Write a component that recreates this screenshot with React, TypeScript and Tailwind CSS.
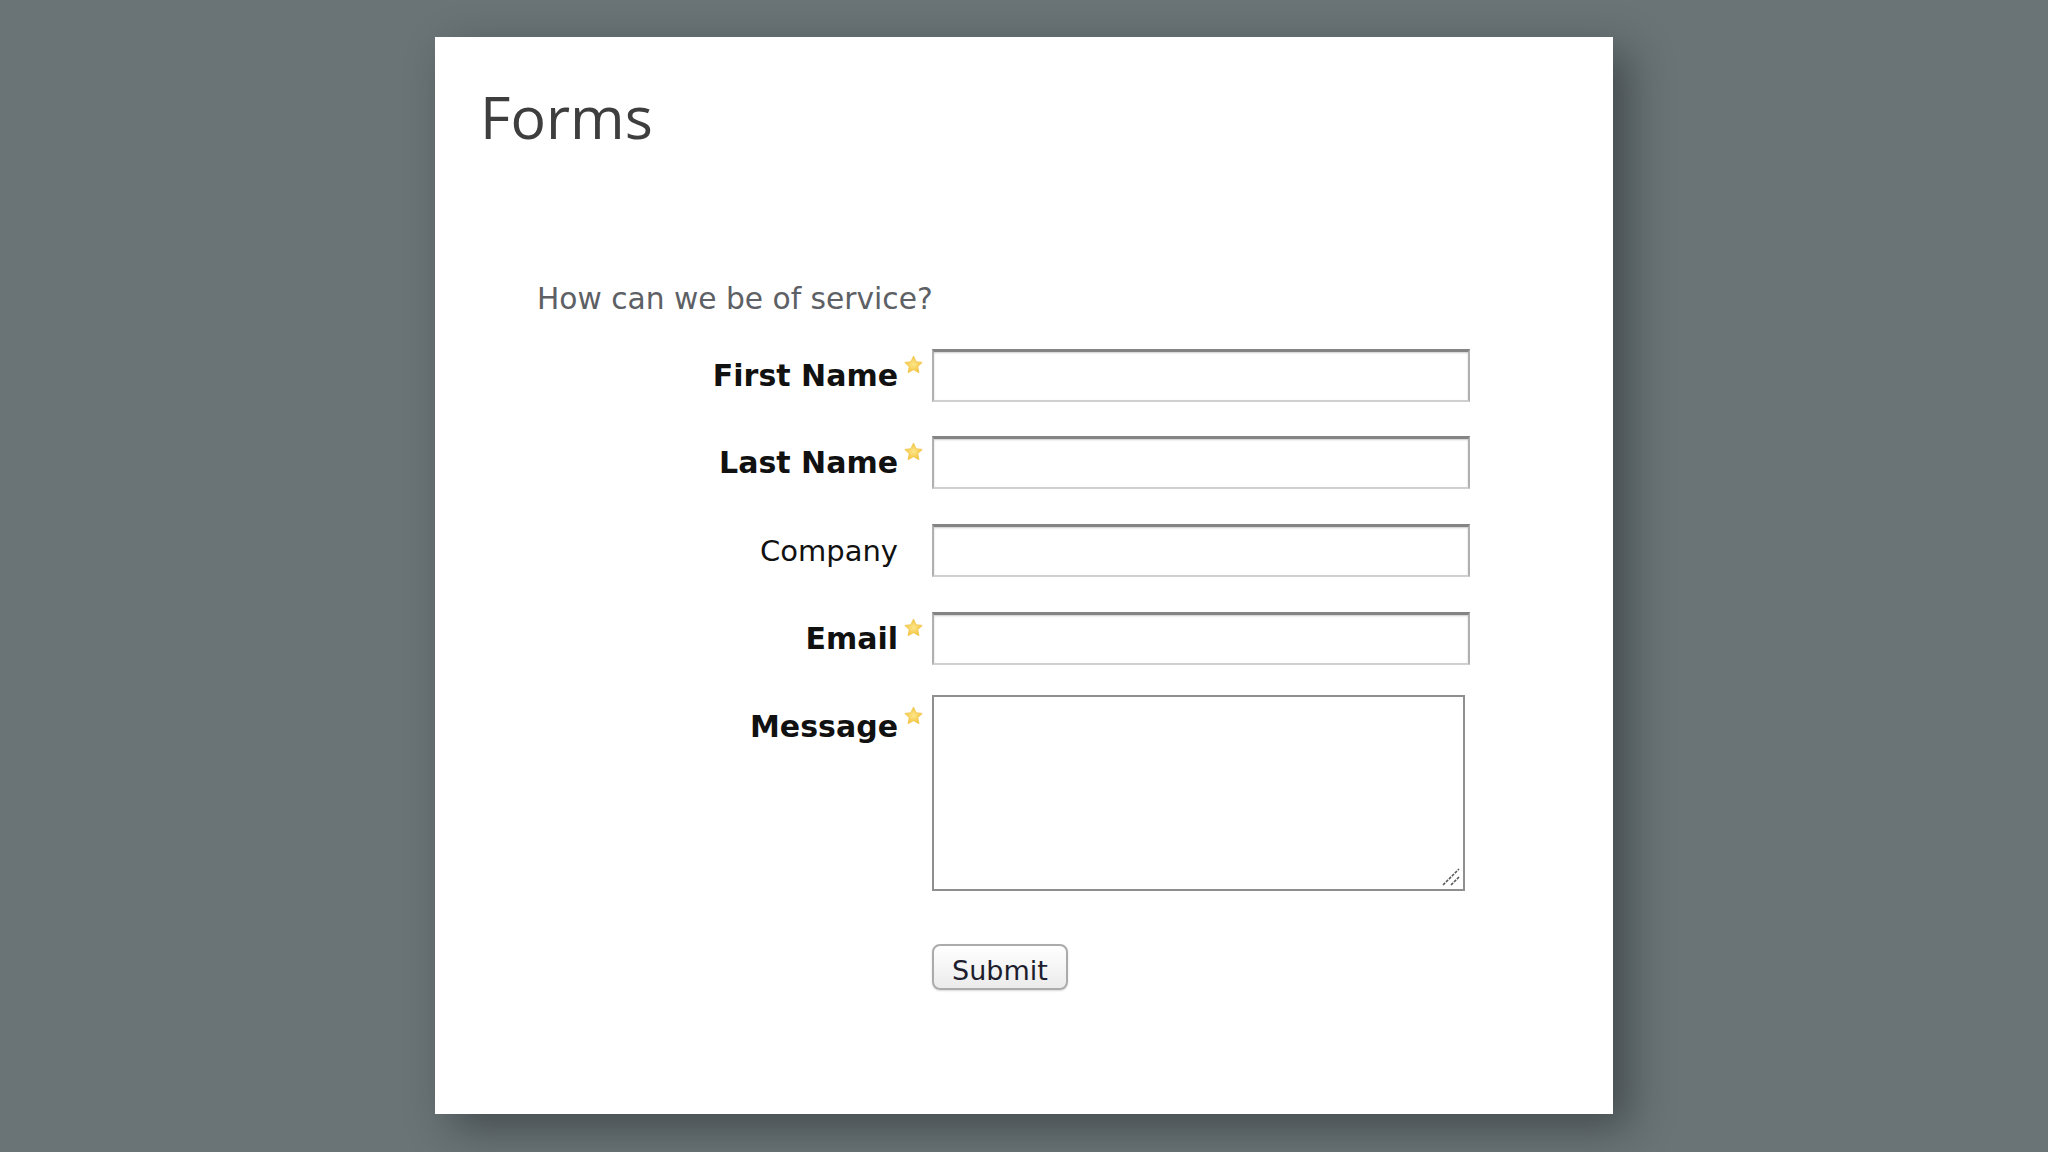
import React from "react";

function Star() {
  return (
    <svg
      width="21"
      height="19"
      viewBox="0 0 24 22"
      className="absolute right-[-26px] top-[-6px]"
    >
      <defs>
        <radialGradient id="sg" cx="50%" cy="50%" r="55%">
          <stop offset="0%" stopColor="#fde68a" />
          <stop offset="100%" stopColor="#f2c23a" />
        </radialGradient>
      </defs>
      <path
        d="M12 1.2l3.1 6.5 7 .9-5.1 4.9 1.3 7L12 17.1l-6.3 3.4 1.3-7L1.9 8.6l7-.9z"
        fill="url(#sg)"
        stroke="#f0c040"
        strokeWidth="0.8"
        strokeLinejoin="round"
      />
    </svg>
  );
}

function Row({
  label,
  required,
  mt,
}: {
  label: string;
  required?: boolean;
  mt: string;
}) {
  return (
    <div className={`flex items-start ${mt}`}>
      <div className="w-[463px] flex justify-end">
        {required ? (
          <span className="relative mt-[12px] text-[30px] leading-none font-bold text-[#111111] font-['DejaVu_Sans',sans-serif]">
            {label}
            <Star />
          </span>
        ) : (
          <span className="relative mt-[13px] text-[29px] leading-none text-[#111111] font-['DejaVu_Sans',sans-serif]">
            {label}
          </span>
        )}
      </div>
      <input
        type="text"
        className="ml-[34px] w-[538px] h-[53px] bg-white border-2 border-t-[3px] border-t-[#848484] border-l-[#b0b0b0] border-r-[#b0b0b0] border-b-[#d0d0d0] shadow-[inset_0_1px_2px_rgba(0,0,0,0.2)] outline-none"
      />
    </div>
  );
}

export default function App() {
  return (
    <div className="w-[2048px] h-[1152px] bg-[#6a7476] overflow-hidden pt-[37px] pl-[435px]">
      <div className="w-[1178px] h-[1077px] bg-white shadow-[16px_14px_40px_rgba(20,24,28,0.45)]">
        <h1 className="pt-[50px] pl-[45px] text-[59px] leading-none font-normal text-[#3e3e3e] font-['Open_Sans',sans-serif]">
          Forms
        </h1>
        <p className="mt-[138px] ml-[102px] text-[29.7px] leading-none text-[#5d6064] font-['DejaVu_Sans',sans-serif]">
          How can we be of service?
        </p>
        <div className="flex flex-col">
          <Row label="First Name" required mt="mt-[35px]" />
          <Row label="Last Name" required mt="mt-[34px]" />
          <Row label="Company" mt="mt-[35px]" />
          <Row label="Email" required mt="mt-[35px]" />
          <div className="flex items-start mt-[30px]">
            <div className="w-[463px] flex justify-end">
              <span className="relative mt-[17px] text-[30px] leading-none font-bold text-[#111111] font-['DejaVu_Sans',sans-serif]">
                Message
                <Star />
              </span>
            </div>
            <div className="relative ml-[34px] w-[533px] h-[196px]">
              <textarea className="w-full h-full resize-none bg-white border-2 border-[#8f8f8f] outline-none" />
              <svg
                width="22"
                height="22"
                viewBox="0 0 22 22"
                className="absolute right-[3px] bottom-[3px]"
              >
                <line x1="3" y1="19" x2="19" y2="3" stroke="#5a5a5a" strokeWidth="1.6" strokeDasharray="3 1.2" />
                <line x1="11" y1="19" x2="19" y2="11" stroke="#5a5a5a" strokeWidth="1.6" strokeDasharray="3 1.2" />
              </svg>
            </div>
          </div>
          <div className="flex mt-[53px] pl-[497px]">
            <button className="w-[136px] h-[46px] flex justify-center items-start pt-[11px] rounded-[8px] border-2 border-[#ababab] bg-linear-to-b from-white to-[#ebebeb] shadow-[0_1px_2px_rgba(0,0,0,0.15)] text-[27px] leading-none text-[#1d1d2e] font-['DejaVu_Sans',sans-serif]">
              Submit
            </button>
          </div>
        </div>
      </div>
    </div>
  );
}
